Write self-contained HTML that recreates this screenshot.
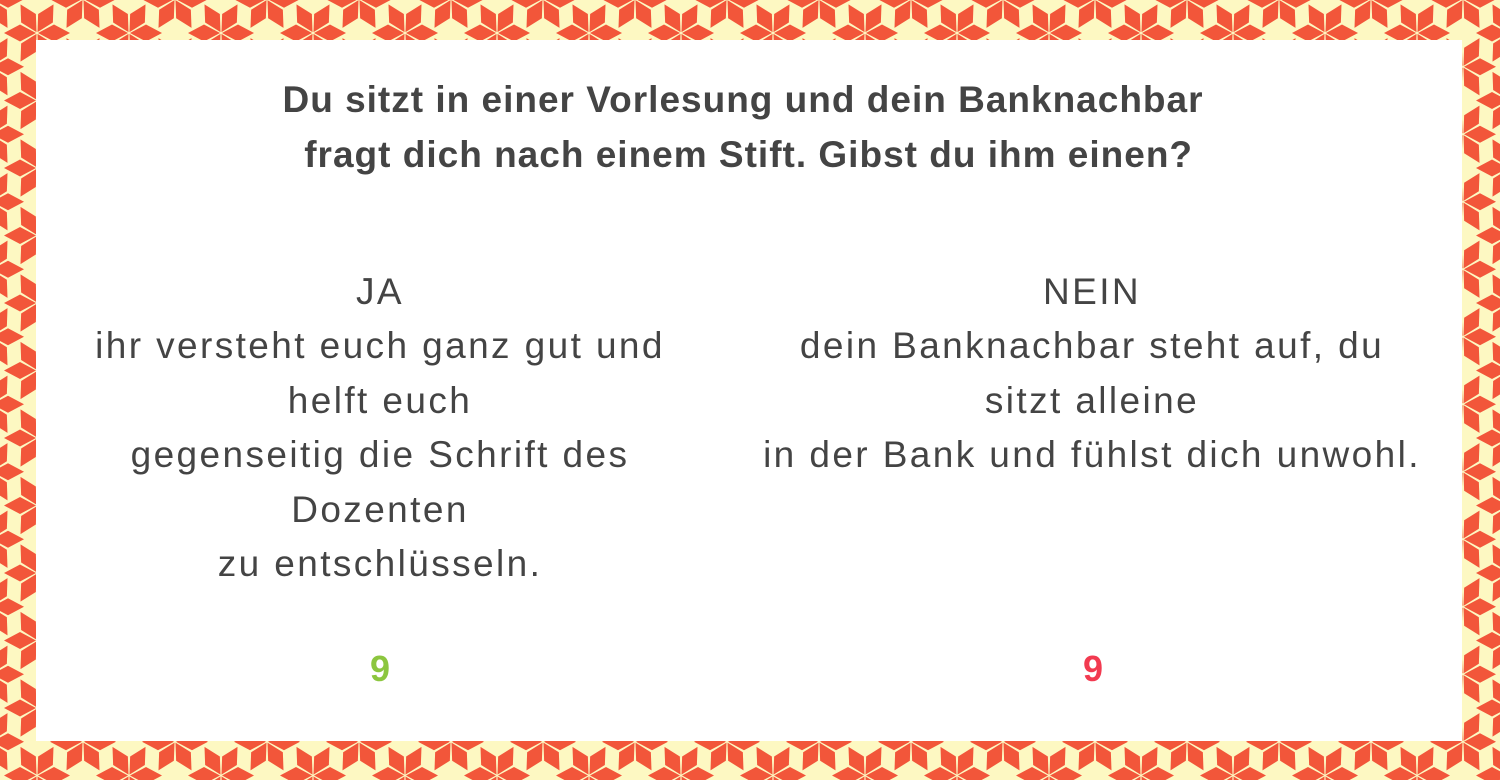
<!DOCTYPE html>
<html><head><meta charset="utf-8"><style>
html,body{margin:0;padding:0;width:1500px;height:780px;overflow:hidden;background:#fdf8c2;}
svg.bg{position:absolute;left:0;top:0;}
.panel{position:absolute;left:36px;top:40px;width:1426px;height:701px;background:#fff;}
.t{position:absolute;left:0;width:1486px;text-align:center;font-family:"Liberation Sans",sans-serif;color:#444;}
.title{font-weight:bold;font-size:37px;letter-spacing:1px;line-height:55px;top:72px;}
.col{position:absolute;top:265px;text-align:center;font-family:"Liberation Sans",sans-serif;color:#444;font-size:37px;line-height:54.4px;letter-spacing:2.4px;white-space:nowrap;}
.num{position:absolute;top:648px;font-family:"Liberation Sans",sans-serif;font-weight:bold;font-size:36px;}
</style></head><body>
<svg class="bg" width="1500" height="780">
<defs>
<g id="d"><path d="M1 0 L17 -8.5 L33 0 L17 8.5 Z" fill="#f2563a"/></g>
<g id="s"><use href="#d"/><use href="#d" transform="rotate(60)"/><use href="#d" transform="rotate(120)"/><use href="#d" transform="rotate(180)"/><use href="#d" transform="rotate(240)"/><use href="#d" transform="rotate(300)"/></g>
<pattern id="p" x="37" y="33" width="92" height="67.5" patternUnits="userSpaceOnUse">
<use href="#s" x="0" y="0"/><use href="#s" x="92" y="0"/><use href="#s" x="0" y="67.5"/><use href="#s" x="92" y="67.5"/>
<use href="#s" x="46" y="33.75"/>
</pattern>
</defs>
<rect width="1500" height="780" fill="url(#p)"/>
</svg>
<div class="panel"></div>
<div class="t title">Du sitzt in einer Vorlesung und dein Banknachbar<br>&nbsp;fragt dich nach einem Stift. Gibst du ihm einen?</div>
<div class="col" style="left:80px;width:600px;">JA<br>ihr versteht euch ganz gut und<br>helft euch<br>gegenseitig die Schrift des<br>Dozenten<br>zu entschlüsseln.</div>
<div class="col" style="left:742px;width:700px;">NEIN<br>dein Banknachbar steht auf, du<br>sitzt alleine<br>in der Bank und fühlst dich unwohl.</div>
<div class="num" style="left:370px;color:#8cc63f;">9</div>
<div class="num" style="left:1083px;color:#f23a50;">9</div>
</body></html>
